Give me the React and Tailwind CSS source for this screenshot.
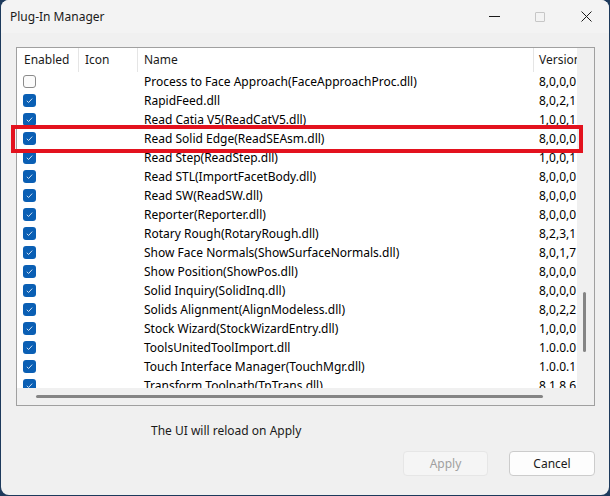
import React from "react";

const rows = [
  [false, "Process to Face Approach(FaceApproachProc.dll)", "8,0,0,0"],
  [true, "RapidFeed.dll", "8,0,2,1"],
  [true, "Read Catia V5(ReadCatV5.dll)", "1,0,0,1"],
  [true, "Read Solid Edge(ReadSEAsm.dll)", "8,0,0,0"],
  [true, "Read Step(ReadStep.dll)", "1,0,0,1"],
  [true, "Read STL(ImportFacetBody.dll)", "8,0,0,0"],
  [true, "Read SW(ReadSW.dll)", "8,0,0,0"],
  [true, "Reporter(Reporter.dll)", "8,0,0,0"],
  [true, "Rotary Rough(RotaryRough.dll)", "8,2,3,1"],
  [true, "Show Face Normals(ShowSurfaceNormals.dll)", "8,0,1,7"],
  [true, "Show Position(ShowPos.dll)", "8,0,0,0"],
  [true, "Solid Inquiry(SolidInq.dll)", "8,0,0,0"],
  [true, "Solids Alignment(AlignModeless.dll)", "8,0,2,2"],
  [true, "Stock Wizard(StockWizardEntry.dll)", "1,0,0,0"],
  [true, "ToolsUnitedToolImport.dll", "1.0.0.0"],
  [true, "Touch Interface Manager(TouchMgr.dll)", "1.0.0.1"],
  [true, "Transform Toolpath(TpTrans.dll)", "8.1.8.6"],
];

function Check({ on }) {
  if (!on)
    return (
      <div className="w-[13px] h-[13px] rounded-[3px] border border-[#8b8b8b] bg-[#fbfbfb]" />
    );
  return (
    <div className="w-[13px] h-[13px] rounded-[3px] bg-[#0a5fb4] flex items-center justify-center">
      <svg width="9" height="9" viewBox="0 0 9 9">
        <path d="M1.8 4.8 L3.6 6.5 L7.2 2.6" fill="none" stroke="#cfe0f3" strokeWidth="1" />
      </svg>
    </div>
  );
}

export default function App() {
  return (
    <div
      className="w-[610px] h-[496px] bg-[#1d3a5c] pl-[1px] pr-[1px] pb-[1px] overflow-hidden"
      style={{ fontFamily: '"Noto Sans", sans-serif' }}
    >
      <div className="w-full h-full rounded-[8px] bg-[#f0f0f0] flex flex-col overflow-hidden text-[12px] text-black">
        {/* title bar */}
        <div className="h-[33px] bg-[#f3f3f3] flex items-center relative shrink-0">
          <span className="pl-[9px] text-[12px] text-[#1a1a1a]">Plug-In Manager</span>
          <div className="ml-auto flex items-center h-full">
            <div className="w-[46px] h-full flex items-center justify-center">
              <div className="w-[11px] h-[1px] bg-[#1a1a1a]" />
            </div>
            <div className="w-[46px] h-full flex items-center justify-center">
              <div className="w-[10px] h-[10px] border border-[#c6c6c6] rounded-[1px]" />
            </div>
            <div className="w-[46px] h-full flex items-center justify-center">
              <svg width="11" height="11" viewBox="0 0 11 11">
                <path d="M0.5 0.5 L10.5 10.5 M10.5 0.5 L0.5 10.5" stroke="#1a1a1a" strokeWidth="1" />
              </svg>
            </div>
          </div>
        </div>

        {/* list */}
        <div className="relative ml-[15px] mt-[14px] w-[579px] h-[359px] border border-[#a0a0a0] bg-[#f0f0f0] flex flex-col">
          <div className="flex flex-1 min-h-0">
            <div className="w-[560px] bg-white overflow-hidden flex flex-col">
              {/* header */}
              <div className="h-[24px] flex items-center shrink-0 text-[#1a1a1a]">
                <div className="w-[62px] h-full flex items-center pl-[7px] border-r border-[#e5e5e5]">Enabled</div>
                <div className="w-[59px] h-full flex items-center pl-[6px] border-r border-[#e5e5e5]">Icon</div>
                <div className="w-[396px] h-full flex items-center pl-[6px] border-r border-[#e5e5e5]">Name</div>
                <div className="flex-1 h-full flex items-center pl-[5px] overflow-hidden whitespace-nowrap">Version</div>
              </div>
              {rows.map(([on, name, ver], i) => (
                <div key={i} className="h-[19px] flex items-center shrink-0">
                  <div className="w-[62px] pl-[6px] flex items-center">
                    <Check on={on} />
                  </div>
                  <div className="w-[59px]" />
                  <div className="w-[396px] pl-[6px] whitespace-nowrap">{name}</div>
                  <div className="flex-1 pl-[5px] whitespace-nowrap">{ver}</div>
                </div>
              ))}
            </div>
            <div className="flex-1 relative">
              <div className="absolute left-[6px] top-[244px] w-[3px] h-[60px] rounded-full bg-[#858585]" />
            </div>
          </div>
          <div className="h-[17px] shrink-0 flex items-center">
            <div className="ml-[19px] w-[507px] h-[3px] rounded-full bg-[#858585]" />
          </div>

          {/* red annotation */}
          <div className="absolute left-[-6px] top-[77px] w-[572px] h-[28px] border-[4px] border-[#e3121e]" />
        </div>

        {/* footer */}
        <div className="pl-[150px] mt-[16px] text-[#1a1a1a]">The UI will reload on Apply</div>
        <div className="flex justify-end gap-[21px] pr-[14px] mt-[11px]">
          <div className="w-[85px] h-[25px] rounded-[4px] border border-[#e6e6e6] bg-[#f5f5f5] flex items-center justify-center text-[#a0a0a0]">
            Apply
          </div>
          <div className="w-[86px] h-[25px] rounded-[4px] border border-[#cccccc] bg-[#fdfdfd] flex items-center justify-center text-[#1a1a1a]">
            Cancel
          </div>
        </div>
      </div>
    </div>
  );
}
